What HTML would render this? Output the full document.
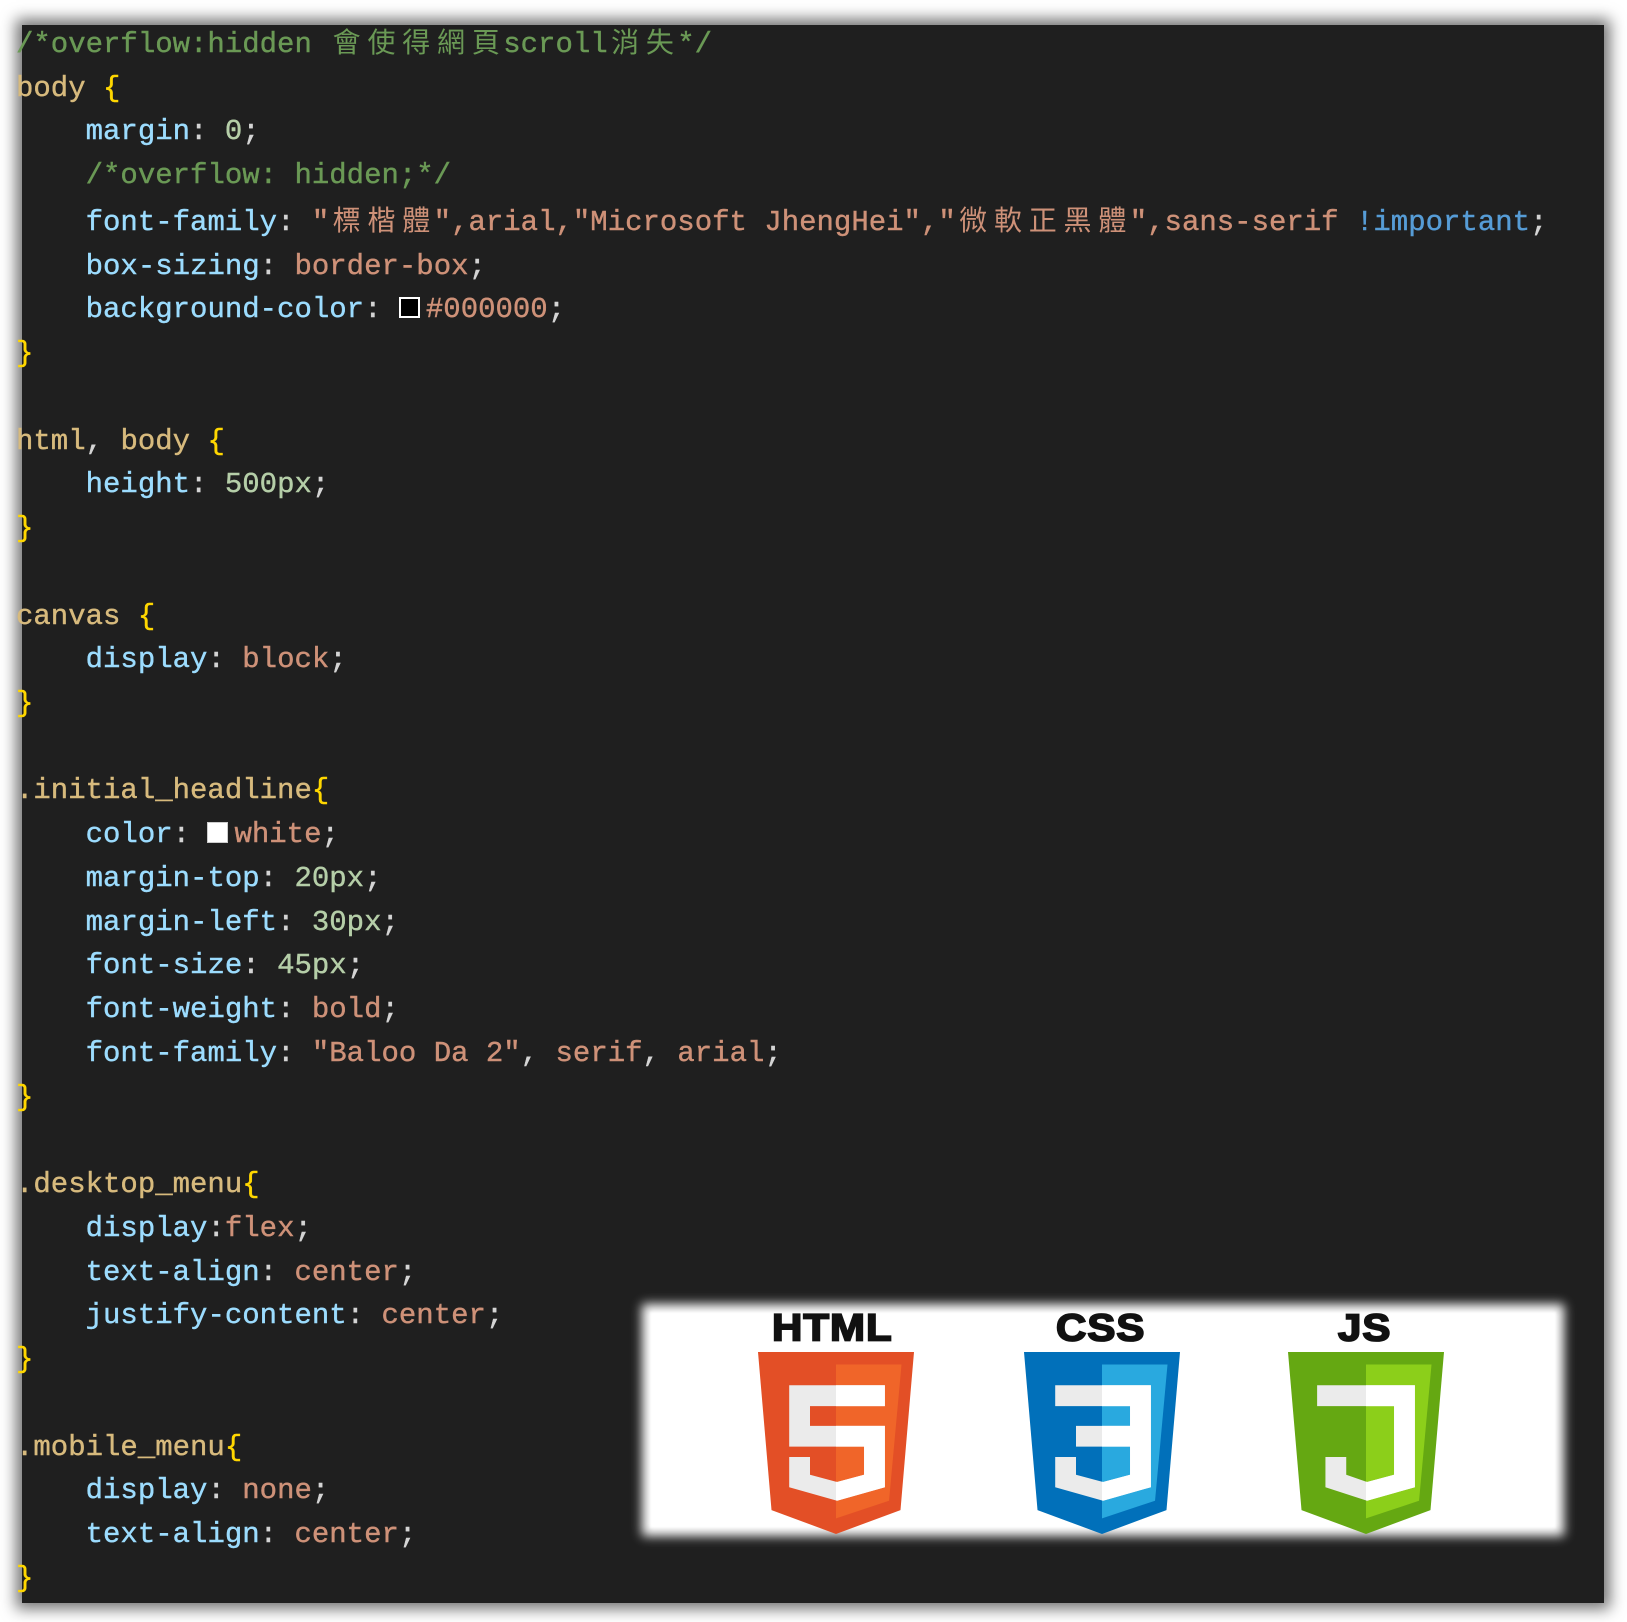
<!DOCTYPE html>
<html><head><meta charset="utf-8">
<style>
html,body{margin:0;padding:0;background:#fff;width:1627px;height:1622px;overflow:hidden;position:relative}
.panel{position:absolute;left:22px;top:25px;width:1582px;height:1578px;background:#1f1f1f;box-shadow:0 0 14px 6px rgba(0,0,0,.55)}
.code{position:absolute;left:16px;top:20px;font-family:"Liberation Mono","Noto Sans CJK TC",monospace;font-size:29px;line-height:43.73px;white-space:pre;color:#d4d4d4;-webkit-text-stroke:0.4px currentColor}
.c{color:#6a9955}.s{color:#d7ba7d}.b{color:#ffd700}.p{color:#9cdcfe}.v{color:#ce9178}.n{color:#b5cea8}.k{color:#569cd6}
.j{display:inline-block;width:34.8px;text-align:center;font-family:"Noto Sans CJK TC",sans-serif;font-size:28px;-webkit-text-stroke:0}
.sw{display:inline-block;width:21px;height:21px;box-sizing:border-box;vertical-align:-1px;margin:0 6px 0 0;-webkit-text-stroke:0}
.logos{position:absolute;left:650px;top:1312px;width:906px;height:216px;background:#fff;box-shadow:0 0 10px 8px #fff;filter:blur(1px)}
.lab{position:absolute;top:1304px;font-family:"Liberation Sans Narrow","Liberation Sans",sans-serif;font-weight:bold;font-size:42px;color:#111;transform:scaleY(0.9);letter-spacing:1px;-webkit-text-stroke:2px #111}
svg{position:absolute}
</style></head><body>
<div class="panel"></div>
<div class="code"><span class="c">/*overflow:hidden <span class="j">會</span><span class="j">使</span><span class="j">得</span><span class="j">網</span><span class="j">頁</span>scroll<span class="j">消</span><span class="j">失</span>*/</span>
<span class="s">body</span> <span class="b">{</span>
    <span class="p">margin</span>: <span class="n">0</span>;
    <span class="c">/*overflow: hidden;*/</span>
    <span class="p">font-family</span>: <span class="v">"<span class="j">標</span><span class="j">楷</span><span class="j">體</span>",arial,"Microsoft JhengHei","<span class="j">微</span><span class="j">軟</span><span class="j">正</span><span class="j">黑</span><span class="j">體</span>",sans-serif</span> <span class="k">!important</span>;
    <span class="p">box-sizing</span>: <span class="v">border-box</span>;
    <span class="p">background-color</span>: <span class="sw" style="background:#000;border:2px solid #fff"></span><span class="v">#000000</span>;
<span class="b">}</span>

<span class="s">html</span>, <span class="s">body</span> <span class="b">{</span>
    <span class="p">height</span>: <span class="n">500px</span>;
<span class="b">}</span>

<span class="s">canvas</span> <span class="b">{</span>
    <span class="p">display</span>: <span class="v">block</span>;
<span class="b">}</span>

<span class="s">.initial_headline</span><span class="b">{</span>
    <span class="p">color</span>: <span class="sw" style="background:#fff;border:1px solid #ccc"></span><span class="v">white</span>;
    <span class="p">margin-top</span>: <span class="n">20px</span>;
    <span class="p">margin-left</span>: <span class="n">30px</span>;
    <span class="p">font-size</span>: <span class="n">45px</span>;
    <span class="p">font-weight</span>: <span class="v">bold</span>;
    <span class="p">font-family</span>: <span class="v">"Baloo Da 2"</span>, <span class="v">serif</span>, <span class="v">arial</span>;
<span class="b">}</span>

<span class="s">.desktop_menu</span><span class="b">{</span>
    <span class="p">display</span>:<span class="v">flex</span>;
    <span class="p">text-align</span>: <span class="v">center</span>;
    <span class="p">justify-content</span>: <span class="v">center</span>;
<span class="b">}</span>

<span class="s">.mobile_menu</span><span class="b">{</span>
    <span class="p">display</span>: <span class="v">none</span>;
    <span class="p">text-align</span>: <span class="v">center</span>;
<span class="b">}</span></div>

<div class="logos"></div>
<div class="lab" style="left:772px">HTML</div>
<div class="lab" style="left:1056px">CSS</div>
<div class="lab" style="left:1338px">JS</div>

<svg width="0" height="0"><defs><clipPath id="rh"><rect x="75" y="0" width="80" height="180"/></clipPath></defs></svg>

<svg style="left:757px;top:1352px" width="158" height="182" viewBox="0 0 150 175">
<path d="M0 0H150L137 152L75 175L13 152Z" fill="#e34f26"/><path d="M75 12H138L126 143L75 160Z" fill="#f06529"/>
<path d="M30 32H122V52H50V71H122V130L76 143L30 130V101H50V118L76 125L102 118V91H30Z" fill="#ebebeb"/>
<path d="M30 32H122V52H50V71H122V130L76 143L30 130V101H50V118L76 125L102 118V91H30Z" fill="#fff" clip-path="url(#rh)"/>
</svg>
<svg style="left:1023px;top:1352px" width="158" height="182" viewBox="0 0 150 175">
<path d="M0 0H150L137 152L75 175L13 152Z" fill="#0170ba"/><path d="M75 12H138L126 143L75 160Z" fill="#29a9df"/>
<path d="M30 32H122V130L76 143L30 130V101H50V118L76 125L102 118V91H50V71H102V52H30Z" fill="#ebebeb"/>
<path d="M30 32H122V130L76 143L30 130V101H50V118L76 125L102 118V91H50V71H102V52H30Z" fill="#fff" clip-path="url(#rh)"/>
</svg>
<svg style="left:1287px;top:1352px" width="158" height="182" viewBox="0 0 150 175">
<path d="M0 0H150L137 152L75 175L13 152Z" fill="#65a812"/><path d="M75 12H138L126 143L75 160Z" fill="#8ccf1a"/>
<path d="M28 32H122V130L76 143L36 130V101H56V118L76 125L102 118V52H28Z" fill="#ebebeb"/>
<path d="M28 32H122V130L76 143L36 130V101H56V118L76 125L102 118V52H28Z" fill="#fff" clip-path="url(#rh)"/>
</svg>
</body></html>
